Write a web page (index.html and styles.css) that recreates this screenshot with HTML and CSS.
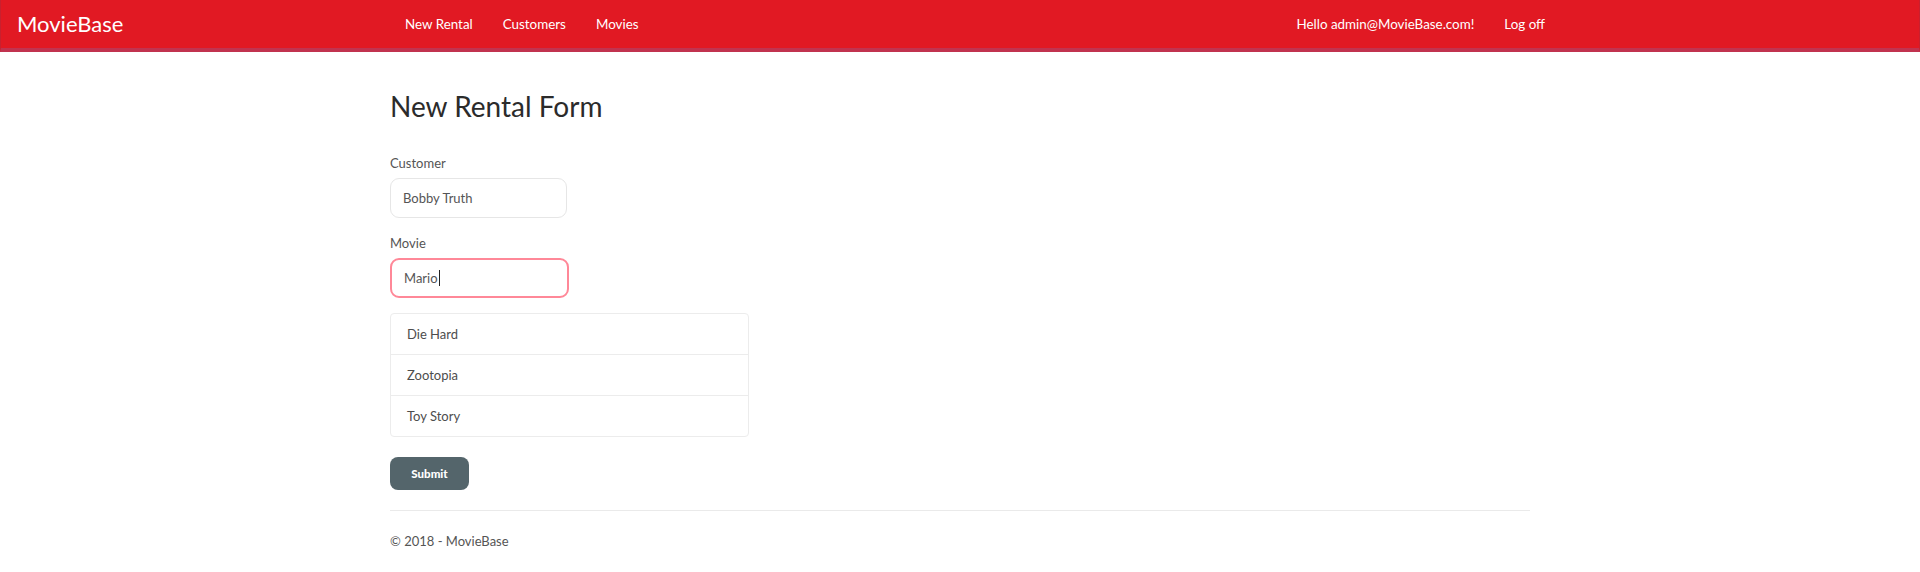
FILE: index.html
```html
<!DOCTYPE html>
<html lang="en">
<head>
<meta charset="utf-8">
<title>New Rental Form - MovieBase</title>
<link rel="stylesheet" href="styles.css">
</head>
<body>
<header class="navbar">
  <a class="brand" href="#">MovieBase</a>
  <nav class="nav-container">
    <ul class="nav">
      <li><a href="#">New Rental</a></li>
      <li><a href="#">Customers</a></li>
      <li><a href="#">Movies</a></li>
    </ul>
    <ul class="nav nav-right">
      <li><a href="#">Hello admin@MovieBase.com!</a></li>
      <li><a href="#">Log off</a></li>
    </ul>
  </nav>
</header>
<main class="container">
  <h2 class="title">New Rental Form</h2>
  <form class="form">
    <div class="form-group">
      <label class="label" for="customer">Customer</label>
      <input class="form-control" id="customer" type="text" value="Bobby Truth">
    </div>
    <div class="form-group">
      <label class="label" for="movie">Movie</label>
      <div class="form-control focused"><span>Mario</span><span class="caret"></span></div>
    </div>
    <ul class="list-group">
      <li class="list-item">Die Hard</li>
      <li class="list-item">Zootopia</li>
      <li class="list-item">Toy Story</li>
    </ul>
    <button class="btn" type="button">Submit</button>
  </form>
  <hr class="rule">
  <footer class="footer">© 2018 - MovieBase</footer>
</main>
</body>
</html>
```
FILE: styles.css
```css
* { box-sizing: border-box; }
html, body { margin: 0; padding: 0; }
body {
  font-family: Lato, "Open Sans", sans-serif;
  font-size: 13px;
  line-height: 20px;
  color: #555;
  background: #fff;
}
a { text-decoration: none; }
ul { list-style: none; margin: 0; padding: 0; }

.navbar {
  display: grid;
  grid-template-columns: 1fr 1170px 1fr;
  height: 52px;
  background: #e11923;
  border-left: 1px solid #c9202e;
  border-right: 1px solid #c9202e;
  border-bottom: 4px solid #c1334f;
}
.brand {
  color: #fff;
  font-size: 22px;
  line-height: 48px;
  padding: 0 16px;
}
.nav-container {
  grid-column: 2;
  display: flex;
  justify-content: space-between;
  padding: 0 0 0 15px;
}
.nav { display: flex; }
.nav a {
  display: block;
  color: #fff;
  font-size: 13.4px;
  padding: 14px 15px;
  line-height: 20px;
}
.nav-right { margin-right: -15px; }

.container {
  width: 1170px;
  margin: 0 auto;
  padding: 0 15px;
}
.title {
  font-size: 28px;
  font-weight: 400;
  line-height: 31px;
  color: #2b2b2b;
  margin: 39px 0 31px;
}
.form-group { margin-bottom: 15px; }
.label {
  display: block;
  margin-bottom: 5px;
  color: #555;
}
.form-control {
  display: flex;
  align-items: center;
  width: 177px;
  height: 40px;
  padding: 0 12px;
  font: inherit;
  color: #555;
  border: 1px solid #e6e6e6;
  border-radius: 9px;
  background: #fff;
  outline: none;
}
.focused {
  width: 179px;
  border: 2px solid #ff8898;
  padding-left: 12px;
}
.caret {
  display: inline-block;
  width: 1px;
  height: 16px;
  background: #222;
  margin-left: 1px;
}
.list-group {
  width: 359px;
  border: 1px solid #ececec;
  border-radius: 4px;
  margin: 0 0 20px;
}
.list-item {
  height: 41px;
  padding: 10px 16px;
  color: #4d4d4d;
  border-bottom: 1px solid #ececec;
}
.list-item:last-child { border-bottom: 0; height: 40px; }
.btn {
  width: 79px;
  height: 33px;
  border: 0;
  border-radius: 8px;
  background: #54656b;
  color: #fff;
  font: inherit;
  font-size: 11.5px;
  font-weight: 900;
  cursor: pointer;
}
.rule {
  border: 0;
  border-top: 1px solid #eaeaea;
  margin: 20px 0 20px;
}
.footer { color: #555; }
```
